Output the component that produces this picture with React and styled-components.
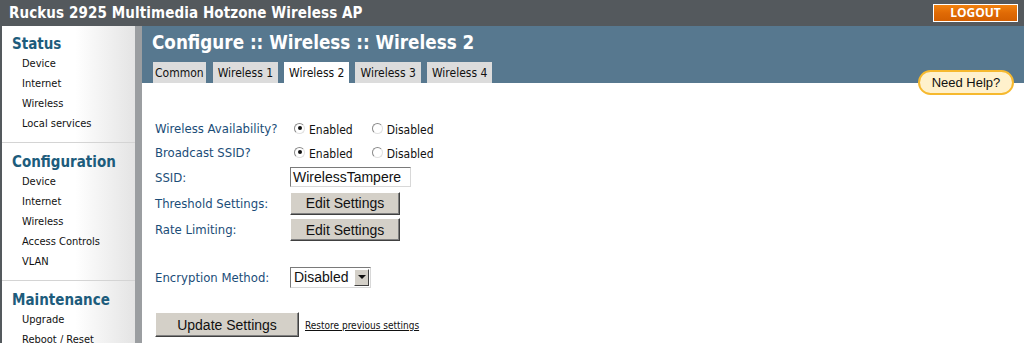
import React from "react";
import styled, { createGlobalStyle } from "styled-components";

const GlobalStyle = createGlobalStyle`
  html, body {
    margin: 0;
    padding: 0;
    background: #ffffff;
  }
  body {
    font-family: "DejaVu Sans Condensed", "DejaVu Sans", Tahoma, sans-serif;
  }
`;

const Page = styled.div`
  width: 1024px;
  height: 343px;
  overflow: hidden;
  display: flex;
  flex-direction: column;
`;

const TopBar = styled.div`
  height: 26px;
  flex: 0 0 26px;
  background: #54595d;
  display: flex;
  align-items: center;
  justify-content: space-between;
  padding: 0 6px 0 9px;
  box-sizing: border-box;
`;

const AppTitle = styled.div`
  color: #ffffff;
  font-size: 15px;
  font-weight: bold;
  letter-spacing: 0.1px;
`;

const LogoutButton = styled.button`
  width: 85px;
  height: 18px;
  border: 1px solid #ffffff;
  background: linear-gradient(#f2820f, #e06a05 50%, #d45f00);
  color: #ffffff;
  font-family: "Open Sans", "DejaVu Sans", sans-serif;
  font-weight: bold;
  font-size: 12px;
  padding: 0;
  line-height: 16px;
  cursor: pointer;
`;

const Body = styled.div`
  flex: 1;
  display: flex;
  min-height: 0;
`;

const Sidebar = styled.nav`
  width: 142px;
  flex: 0 0 142px;
  box-sizing: border-box;
  border-left: 2px solid #54595d;
  border-right: 7px solid #9b9ea1;
  background: linear-gradient(to right, #ffffff 55%, #e4e4e4);
`;

const NavSection = styled.div`
  padding: ${(p) => (p.first ? "8px" : "9px")} 0 8px;
  border-top: ${(p) => (p.first ? "none" : "1px solid #d4d4d4")};
`;

const NavHeading = styled.div`
  color: #1d5c7c;
  font-size: 15px;
  font-weight: bold;
  padding-left: 10px;
  height: 20px;
  line-height: 20px;
`;

const NavItem = styled.div`
  font-size: 11px;
  color: #111111;
  padding-left: 20px;
  height: 20px;
  line-height: 20px;
`;

const Main = styled.main`
  flex: 1;
  position: relative;
  background: #ffffff;
`;

const Header = styled.div`
  background: #57788f;
  height: 57px;
  padding: 6px 0 0 10px;
  box-sizing: border-box;
  display: flex;
  flex-direction: column;
  justify-content: space-between;
`;

const PageTitle = styled.h1`
  margin: 0;
  color: #ffffff;
  font-size: 18.7px;
  font-weight: bold;
  line-height: 22px;
`;

const Tabs = styled.div`
  display: flex;
  gap: 6px;
  padding-left: 1px;
`;

const Tab = styled.div`
  height: 21px;
  line-height: 22px;
  padding: 0 ${(p) => (p.tight ? 2 : 5)}px;
  margin-right: ${(p) => (p.tight ? 1 : 0)}px;
  font-size: 12px;
  color: #111111;
  background: ${(p) => (p.active ? "#ffffff" : "#dcdcdc")};
`;

const HelpPill = styled.div`
  position: absolute;
  top: 44px;
  right: 10px;
  width: 96px;
  height: 25px;
  box-sizing: border-box;
  border: 2px solid #f6b92f;
  border-radius: 13px;
  background: #fff1cc;
  font-family: "Liberation Sans", Arial, sans-serif;
  font-size: 13px;
  color: #111111;
  display: flex;
  align-items: center;
  justify-content: center;
`;

const Form = styled.div`
  padding: 33px 0 0 13px;
  display: flex;
  flex-direction: column;
`;

const Row = styled.div`
  display: grid;
  grid-template-columns: 135px 1fr;
  align-items: center;
  height: ${(p) => p.h}px;
  margin-top: ${(p) => p.gap || 0}px;
`;

const Label = styled.div`
  color: #1b4d78;
  font-size: 13px;
`;

const Controls = styled.div`
  display: flex;
  align-items: center;
`;

const RadioOption = styled.label`
  display: flex;
  align-items: center;
  gap: 4px;
  font-size: 12px;
  color: #111111;
  margin-left: 4px;
  margin-right: 15px;
  padding-top: 3px;
`;

const RadioCircle = styled.span`
  width: 11px;
  height: 11px;
  box-sizing: border-box;
  border-radius: 50%;
  border: 1px solid #8a8a8a;
  border-right-color: #e0e0e0;
  border-bottom-color: #e0e0e0;
  background: #ffffff;
  display: flex;
  align-items: center;
  justify-content: center;
  margin-top: -3px;
  &::after {
    content: "";
    width: 4px;
    height: 4px;
    border-radius: 50%;
    background: ${(p) => (p.checked ? "#111111" : "transparent")};
  }
`;

const TextInput = styled.div`
  width: 121px;
  height: 20px;
  box-sizing: border-box;
  border: 1px solid #7a7a7a;
  border-right-color: #d8d8d8;
  border-bottom-color: #d8d8d8;
  background: #ffffff;
  font-family: "Liberation Sans", Arial, sans-serif;
  font-size: 14px;
  line-height: 18px;
  padding-left: 2px;
  color: #111111;
`;

const Button = styled.button`
  width: ${(p) => p.w}px;
  height: ${(p) => p.h}px;
  background: #d4d0c8;
  border: 1px solid;
  border-color: #ffffff #404040 #404040 #ffffff;
  box-shadow: inset -1px -1px 0 #808080;
  font-family: "Liberation Sans", Arial, sans-serif;
  font-size: 14px;
  color: #111111;
  padding: 0;
`;

const SelectBox = styled.div`
  width: 81px;
  height: 21px;
  box-sizing: border-box;
  border: 1px solid #7a7a7a;
  border-right-color: #d8d8d8;
  border-bottom-color: #d8d8d8;
  display: flex;
  align-items: center;
  justify-content: space-between;
  padding: 1px;
  font-family: "Liberation Sans", Arial, sans-serif;
  font-size: 14px;
  color: #111111;
  background: #ffffff;
`;

const SelectText = styled.span`
  padding-left: 2px;
`;

const SelectArrow = styled.span`
  width: 15px;
  height: 17px;
  box-sizing: border-box;
  background: #d4d0c8;
  border: 1px solid;
  border-color: #ffffff #404040 #404040 #ffffff;
  display: flex;
  align-items: center;
  justify-content: center;
  &::after {
    content: "";
    border-left: 4px solid transparent;
    border-right: 4px solid transparent;
    border-top: 4px solid #111111;
  }
`;

const ActionRow = styled.div`
  display: flex;
  align-items: center;
  gap: 6px;
  margin-top: 22px;
`;

const RestoreLink = styled.a`
  font-size: 10px;
  color: #111111;
  text-decoration: underline;
  margin-top: 1px;
`;

function Radio({ checked, children }) {
  return (
    <RadioOption>
      <RadioCircle checked={checked} />
      {children}
    </RadioOption>
  );
}

const nav = [
  { title: "Status", items: ["Device", "Internet", "Wireless", "Local services"] },
  {
    title: "Configuration",
    items: ["Device", "Internet", "Wireless", "Access Controls", "VLAN"],
  },
  { title: "Maintenance", items: ["Upgrade", "Reboot / Reset"] },
];

const tabs = ["Common", "Wireless 1", "Wireless 2", "Wireless 3", "Wireless 4"];

export default function App() {
  return (
    <Page>
      <GlobalStyle />
      <TopBar>
        <AppTitle>Ruckus 2925 Multimedia Hotzone Wireless AP</AppTitle>
        <LogoutButton>LOGOUT</LogoutButton>
      </TopBar>
      <Body>
        <Sidebar>
          {nav.map((s, i) => (
            <NavSection key={s.title} first={i === 0}>
              <NavHeading>{s.title}</NavHeading>
              {s.items.map((it) => (
                <NavItem key={it}>{it}</NavItem>
              ))}
            </NavSection>
          ))}
        </Sidebar>
        <Main>
          <Header>
            <PageTitle>Configure :: Wireless :: Wireless 2</PageTitle>
            <Tabs>
              {tabs.map((t) => (
                <Tab key={t} active={t === "Wireless 2"} tight={t === "Common"}>
                  {t}
                </Tab>
              ))}
            </Tabs>
          </Header>
          <HelpPill>Need Help?</HelpPill>
          <Form>
            <Row h={24}>
              <Label>Wireless Availability?</Label>
              <Controls>
                <Radio checked>Enabled</Radio>
                <Radio>Disabled</Radio>
              </Controls>
            </Row>
            <Row h={24}>
              <Label>Broadcast SSID?</Label>
              <Controls>
                <Radio checked>Enabled</Radio>
                <Radio>Disabled</Radio>
              </Controls>
            </Row>
            <Row h={26}>
              <Label>SSID:</Label>
              <Controls>
                <TextInput>WirelessTampere</TextInput>
              </Controls>
            </Row>
            <Row h={26}>
              <Label>Threshold Settings:</Label>
              <Controls>
                <Button w={110} h={23}>Edit Settings</Button>
              </Controls>
            </Row>
            <Row h={27}>
              <Label>Rate Limiting:</Label>
              <Controls>
                <Button w={110} h={23}>Edit Settings</Button>
              </Controls>
            </Row>
            <Row h={26} gap={21}>
              <Label>Encryption Method:</Label>
              <Controls>
                <SelectBox>
                  <SelectText>Disabled</SelectText>
                  <SelectArrow />
                </SelectBox>
              </Controls>
            </Row>
            <ActionRow>
              <Button w={144} h={25}>Update Settings</Button>
              <RestoreLink>Restore previous settings</RestoreLink>
            </ActionRow>
          </Form>
        </Main>
      </Body>
    </Page>
  );
}
